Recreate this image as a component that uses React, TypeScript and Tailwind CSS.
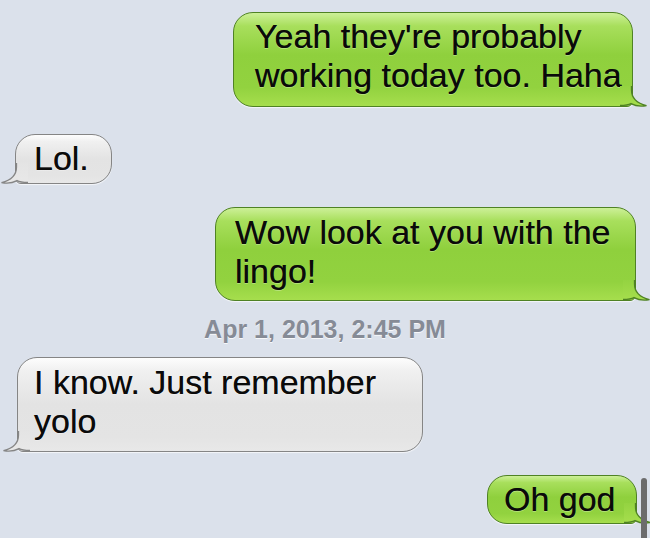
import React from 'react';

const font = { fontFamily: '"Liberation Sans", Arial, Helvetica, sans-serif' };

const GREEN_BG =
  'bg-[linear-gradient(to_bottom,#cdf098_0%,#a8df5c_14%,#8fd03d_45%,#92d23f_80%,#a6de4d_100%)] border-[#4f8224]';
const GRAY_BG =
  'bg-[linear-gradient(to_bottom,#fdfdfd_0%,#f0f0f0_14%,#e3e3e3_50%,#e4e4e4_85%,#e8e8e8_100%)] border-[#858585]';

// tail in the bottom corner of a bubble; mirrored for incoming messages
const Tail: React.FC<{ side: 'left' | 'right'; from: string; to: string; stroke: string; id: string }> = ({
  side,
  from,
  to,
  stroke,
  id,
}) => (
  <svg
    width="28"
    height="24"
    viewBox="0 0 28 24"
    className={
      side === 'right'
        ? 'absolute right-[-16px] bottom-[-1px]'
        : 'absolute left-[-16px] bottom-[-1px] -scale-x-100'
    }
  >
    <defs>
      <linearGradient id={id} x1="0" y1="0" x2="0" y2="1">
        <stop offset="0" stopColor={from} />
        <stop offset="1" stopColor={to} />
      </linearGradient>
    </defs>
    <path
      d="M0 3 H11.5 V7 C11.5 14.5 16 20 26.5 22.6 C20 23.8 15 22.8 11 20.6 C8 22.4 4 22.5 0 22.5 Z"
      fill={`url(#${id})`}
    />
    <path
      d="M11.5 3 V7 C11.5 14.5 16 20 26.5 22.6 C20 23.8 15 22.8 11 20.6 C8 22.4 4 22.5 0 22.5"
      fill="none"
      stroke={stroke}
      strokeWidth="1.3"
    />
  </svg>
);

type BubbleProps = {
  from: 'me' | 'them';
  id: string;
  className: string;
  children: React.ReactNode;
};

const Bubble: React.FC<BubbleProps> = ({ from, id, className, children }) => {
  const me = from === 'me';
  return (
    <div
      className={`relative border text-[34px] leading-[39px] text-[#0a0a0a] shadow-[0_1px_1px_rgba(255,255,255,0.7)] ${
        me ? `${GREEN_BG} rounded-[20px] rounded-br-[6px] self-end` : `${GRAY_BG} rounded-[20px] rounded-bl-[6px] self-start`
      } ${className}`}
      style={{ ...font, textShadow: '0 0 0.4px rgba(0,0,0,0.6), 0 1px 0 rgba(255,255,255,0.3)' }}
    >
      {children}
      {me ? (
        <Tail id={id} side="right" from="#94d341" to="#a6de4d" stroke="#4f8224" />
      ) : (
        <Tail id={id} side="left" from="#e4e4e4" to="#e8e8e8" stroke="#858585" />
      )}
    </div>
  );
};

export default function App() {
  return (
    <div className="relative w-[650px] h-[538px] overflow-hidden bg-[#dbe1eb]">
      <div className="flex flex-col">
        <Bubble id="t1" from="me" className="mt-[12px] mr-[17px] w-[400px] h-[95px] pl-[21px] pt-[4px]">
          Yeah they're probably
          <br />
          working today too. Haha
        </Bubble>

        <Bubble id="t2" from="them" className="mt-[27px] ml-[15px] w-[97px] h-[50px] pl-[18px] pt-[4px]">
          Lol.
        </Bubble>

        <Bubble id="t3" from="me" className="mt-[23px] mr-[14px] w-[421px] h-[94px] pl-[19px] pt-[5px]">
          Wow look at you with the
          <br />
          lingo!
        </Bubble>

        <div
          className="mt-[14px] h-[28px] text-center text-[25px] leading-[28px] font-bold text-[#868b96] [text-shadow:0_1px_0_rgba(255,255,255,0.8)]"
          style={font}
        >
          Apr 1, 2013, 2:45 PM
        </div>

        <Bubble id="t4" from="them" className="mt-[14px] ml-[17px] w-[406px] h-[95px] pl-[16px] pt-[5px]">
          I know. Just remember
          <br />
          yolo
        </Bubble>

        <Bubble id="t5" from="me" className="mt-[23px] mr-[13px] w-[150px] h-[49px] pl-[16px] pt-[4px]">
          Oh god
        </Bubble>
      </div>

      {/* scroll indicator */}
      <div className="absolute right-[3px] top-[478px] w-[6px] h-[70px] rounded-[3px] bg-[#6c6c6c]" />
    </div>
  );
}
